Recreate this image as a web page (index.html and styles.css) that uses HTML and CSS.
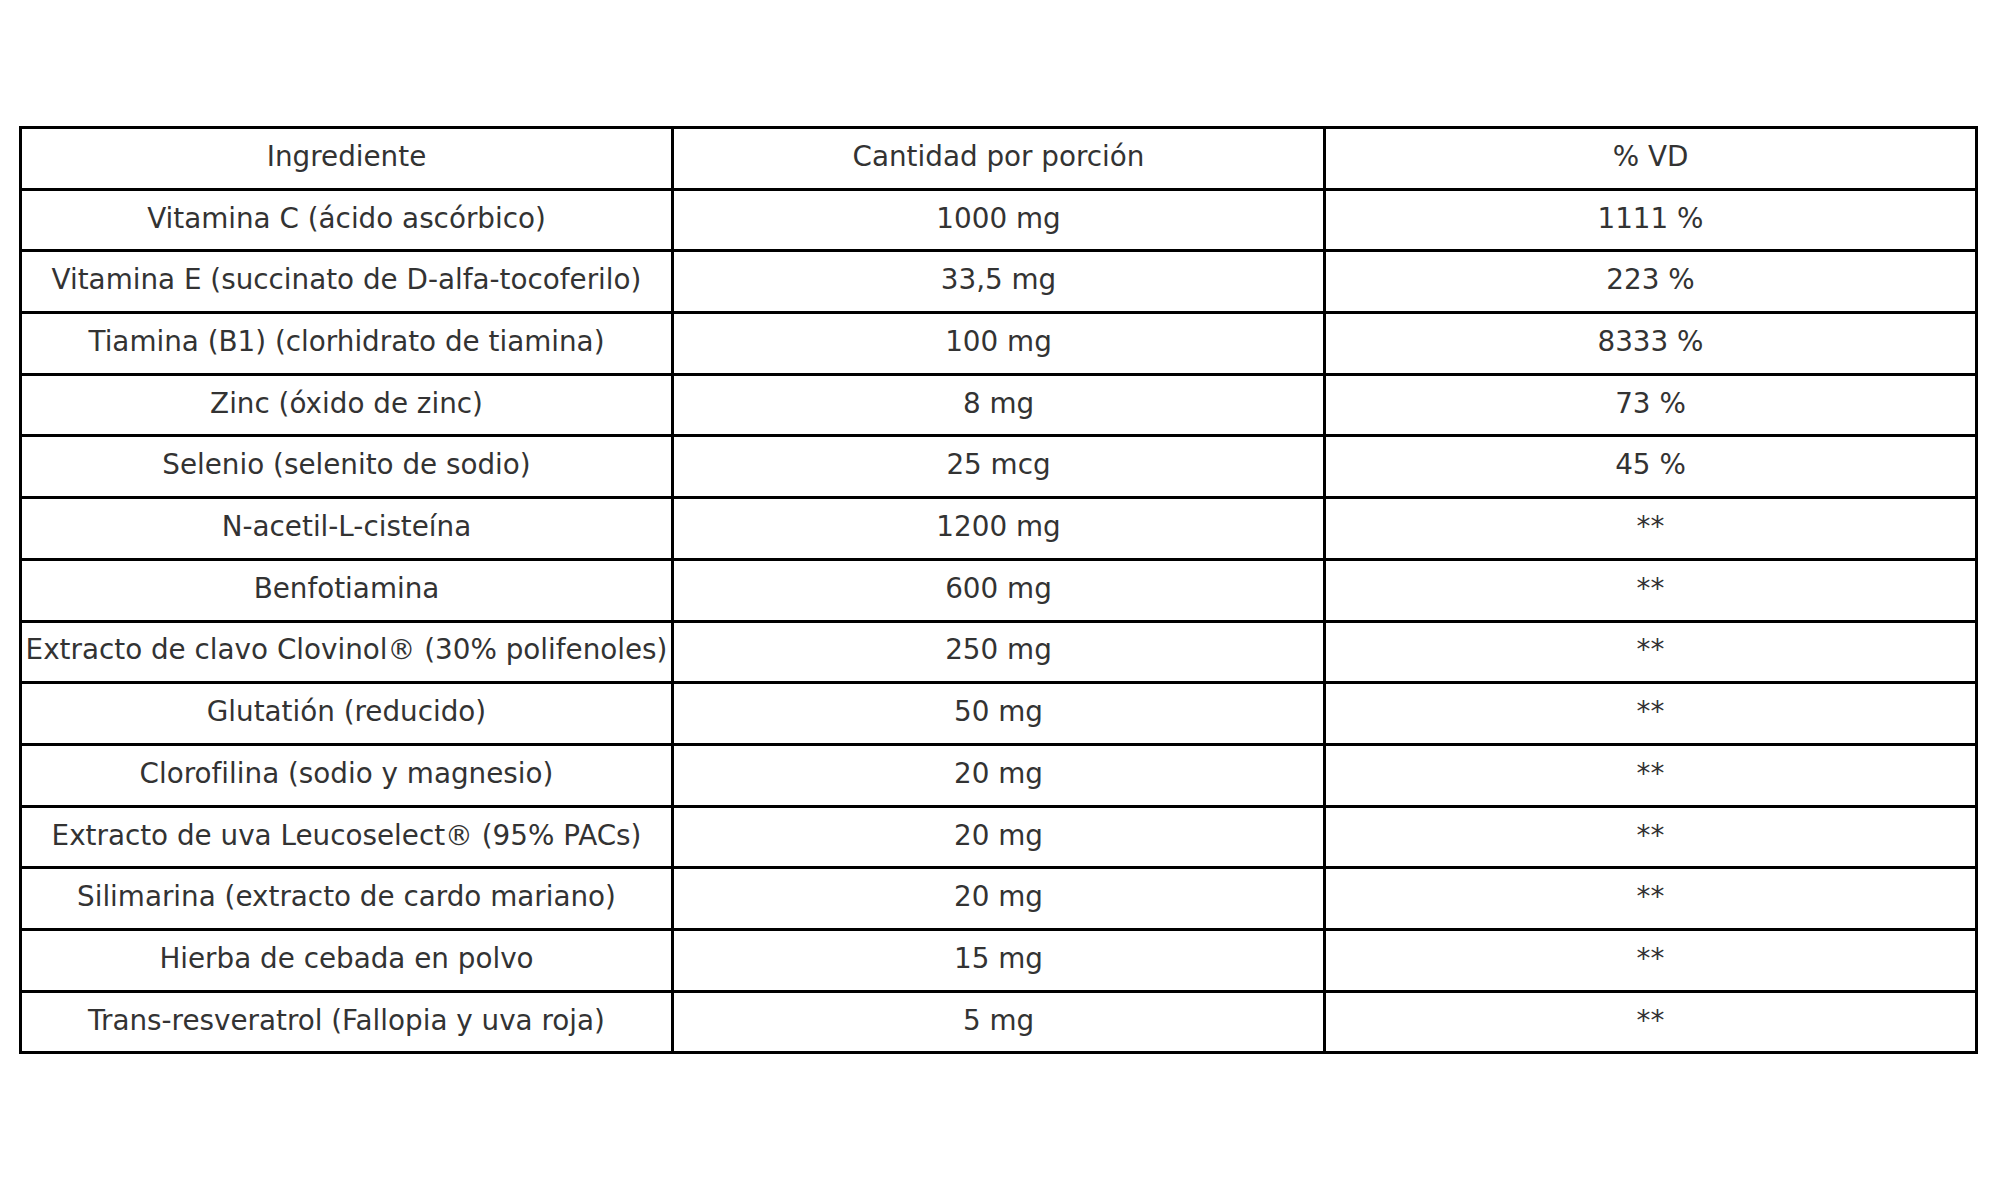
FILE: index.html
```html
<!DOCTYPE html>
<html lang="es">
<head>
<meta charset="utf-8">
<title>Tabla de ingredientes</title>
<link rel="stylesheet" href="styles.css">
</head>
<body>
<main class="page">
<table class="facts">
<thead>
<tr><th>Ingrediente</th><th>Cantidad por porción</th><th>% VD</th></tr>
</thead>
<tbody>
<tr><td>Vitamina C (ácido ascórbico)</td><td>1000 mg</td><td>1111 %</td></tr>
<tr><td>Vitamina E (succinato de D-alfa-tocoferilo)</td><td>33,5 mg</td><td>223 %</td></tr>
<tr><td>Tiamina (B1) (clorhidrato de tiamina)</td><td>100 mg</td><td>8333 %</td></tr>
<tr><td>Zinc (óxido de zinc)</td><td>8 mg</td><td>73 %</td></tr>
<tr><td>Selenio (selenito de sodio)</td><td>25 mcg</td><td>45 %</td></tr>
<tr><td>N-acetil-L-cisteína</td><td>1200 mg</td><td>**</td></tr>
<tr><td>Benfotiamina</td><td>600 mg</td><td>**</td></tr>
<tr><td>Extracto de clavo Clovinol® (30% polifenoles)</td><td>250 mg</td><td>**</td></tr>
<tr><td>Glutatión (reducido)</td><td>50 mg</td><td>**</td></tr>
<tr><td>Clorofilina (sodio y magnesio)</td><td>20 mg</td><td>**</td></tr>
<tr><td>Extracto de uva Leucoselect® (95% PACs)</td><td>20 mg</td><td>**</td></tr>
<tr><td>Silimarina (extracto de cardo mariano)</td><td>20 mg</td><td>**</td></tr>
<tr><td>Hierba de cebada en polvo</td><td>15 mg</td><td>**</td></tr>
<tr><td>Trans-resveratrol (Fallopia y uva roja)</td><td>5 mg</td><td>**</td></tr>
</tbody>
</table>
</main>
</body>
</html>
```
FILE: styles.css
```css
html, body {
  margin: 0;
  padding: 0;
  background: #ffffff;
}
.page {
  padding: 126px 18px 0 19px;
}
.facts {
  width: 100%;
  border-collapse: collapse;
  table-layout: fixed;
  font-family: "DejaVu Sans", "Liberation Sans", sans-serif;
  font-size: 27.8px;
  color: #333333;
}
.facts th,
.facts td {
  border: 3px solid #000000;
  height: 55.7px;
  padding: 0 2px 3px 2px;
  text-align: center;
  vertical-align: middle;
  font-weight: normal;
  white-space: nowrap;
  line-height: 1;
}
```
